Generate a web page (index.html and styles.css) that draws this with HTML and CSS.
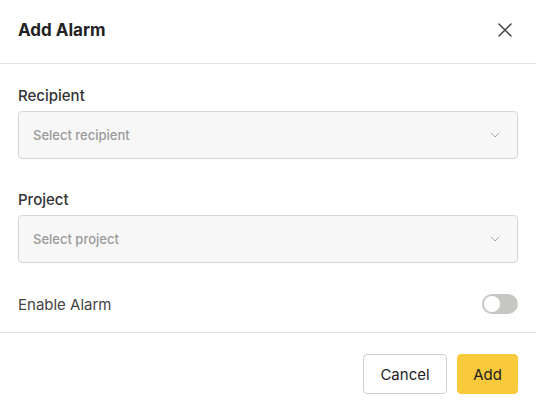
FILE: index.html
```html
<!DOCTYPE html>
<html lang="en">
<head>
    <meta charset="UTF-8">
    <meta name="viewport" content="width=device-width, initial-scale=1.0">
    <title>Add Alarm</title>
    <link rel="stylesheet" href="styles.css">
</head>
<body>
    <div class="modal">
        <div class="modal-header">
            <h1>Add Alarm</h1>
            <button class="close-btn" type="button" aria-label="Close">
                <svg width="14" height="14" viewBox="0 0 14 14">
                    <path d="M1 1L13 13M13 1L1 13" stroke="#444" stroke-width="1.5" fill="none" stroke-linecap="round"/>
                </svg>
            </button>
        </div>

        <div class="modal-body">
            <div class="field">
                <label for="recipient">Recipient</label>
                <div class="select" id="recipient">
                    <span class="placeholder">Select recipient</span>
                    <svg class="chevron" width="10" height="6" viewBox="0 0 10 6">
                        <path d="M1 1L5 5L9 1" stroke="#aaa" stroke-width="1" fill="none"/>
                    </svg>
                </div>
            </div>

            <div class="field">
                <label for="project">Project</label>
                <div class="select" id="project">
                    <span class="placeholder">Select project</span>
                    <svg class="chevron" width="10" height="6" viewBox="0 0 10 6">
                        <path d="M1 1L5 5L9 1" stroke="#aaa" stroke-width="1" fill="none"/>
                    </svg>
                </div>
            </div>

            <div class="toggle-row">
                <span>Enable Alarm</span>
                <span class="toggle"><span class="knob"></span></span>
            </div>
        </div>

        <div class="modal-footer">
            <button type="button" class="btn btn-cancel">Cancel</button>
            <button type="button" class="btn btn-add">Add</button>
        </div>
    </div>
</body>
</html>
```

FILE: styles.css
```css
body {
    font-family: Inter, "Noto Sans", Arial, sans-serif;
    background-color: #fff;
    margin: 0;
    padding: 0;
    color: #222;
}

.modal {
    width: 536px;
    height: 412px;
    background-color: #fff;
}

.modal-header {
    display: flex;
    justify-content: space-between;
    align-items: center;
    padding: 18px 18px 21px;
    border-bottom: 1px solid #e3e3e3;
}

.modal-header h1 {
    margin: 0;
    font-size: 17px;
    line-height: 24px;
    font-weight: 700;
    color: #222;
}

.close-btn {
    width: 22px;
    height: 22px;
    padding: 0;
    margin-right: 2px;
    border: none;
    background: none;
    display: flex;
    align-items: center;
    justify-content: center;
    cursor: pointer;
}

.modal-body {
    padding: 22px 18px 18px;
}

.field {
    margin-bottom: 31px;
}

.field label {
    display: block;
    font-size: 15px;
    line-height: 20px;
    font-weight: 500;
    color: #333;
    margin-bottom: 5px;
}

.select {
    height: 48px;
    box-sizing: border-box;
    border: 1px solid #d6d6d6;
    border-radius: 4px;
    background-color: #f7f7f7;
    padding: 0 17px 0 14px;
    display: flex;
    align-items: center;
    justify-content: space-between;
}

.placeholder {
    font-size: 13px;
    font-weight: 500;
    color: #9a9a9a;
}

.toggle-row {
    display: flex;
    justify-content: space-between;
    align-items: center;
    height: 20px;
    font-size: 15px;
    color: #444;
}

.toggle {
    width: 36px;
    height: 20px;
    border-radius: 10px;
    background-color: #c6c6c2;
    display: flex;
    align-items: center;
    padding: 0 2px;
    box-sizing: border-box;
}

.knob {
    width: 16px;
    height: 16px;
    border-radius: 50%;
    background-color: #fff;
}

.modal-footer {
    display: flex;
    justify-content: flex-end;
    gap: 10px;
    padding: 21px 18px 18px;
    border-top: 1px solid #e3e3e3;
}

.btn {
    height: 40px;
    padding: 0;
    font-family: inherit;
    font-size: 15px;
    color: #222;
    border-radius: 4px;
    cursor: pointer;
}

.btn-cancel {
    width: 84px;
    background-color: #fff;
    border: 1px solid #cfcfcf;
}

.btn-add {
    width: 61px;
    background-color: #f8c93b;
    border: 1px solid #f8c93b;
}
```
